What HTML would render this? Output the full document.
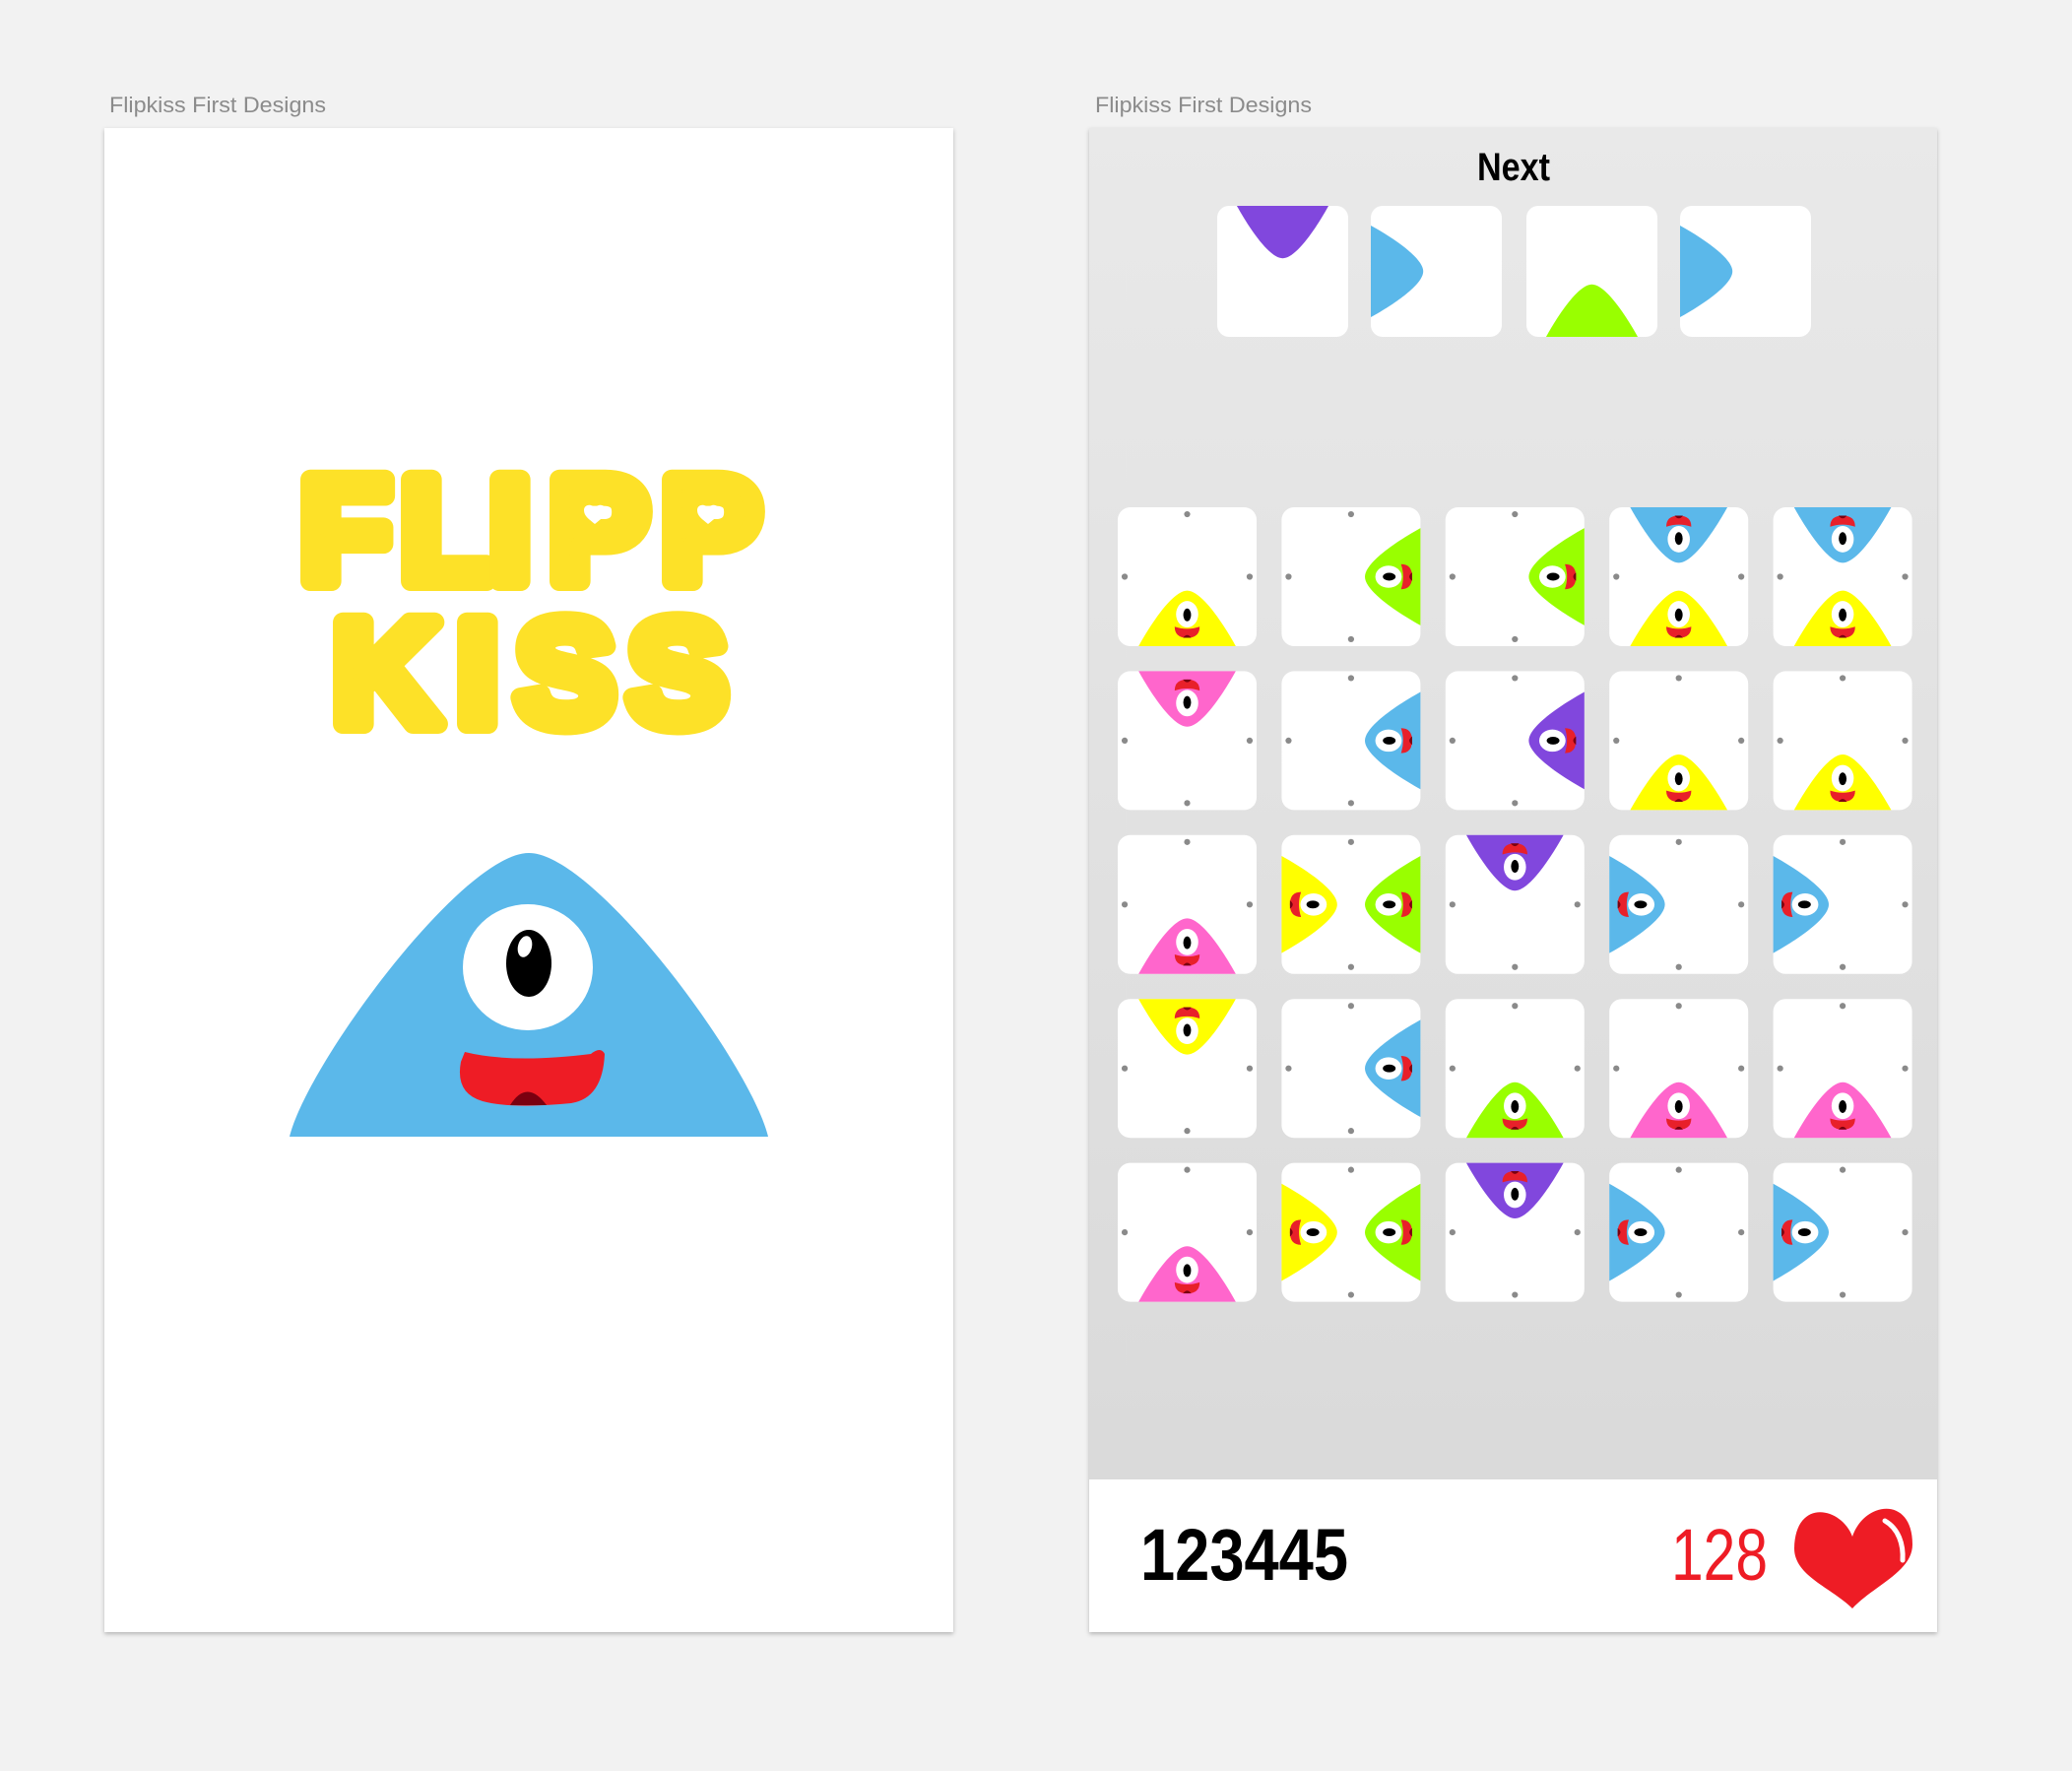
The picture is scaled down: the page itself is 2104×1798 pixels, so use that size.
<!DOCTYPE html>
<html><head><meta charset="utf-8"><style>
html,body{margin:0;padding:0;background:#f2f2f2;}
svg{display:block}
</style></head><body>
<svg width="2104" height="1798" viewBox="0 0 2104 1798" xmlns="http://www.w3.org/2000/svg">
<defs>
<linearGradient id="bg" x1="0" y1="0" x2="0" y2="1">
<stop offset="0" stop-color="#e9e9e9"/><stop offset="1" stop-color="#d8d8d8"/>
</linearGradient>
<filter id="sh" x="-5%" y="-5%" width="110%" height="110%"><feDropShadow dx="0" dy="2" stdDeviation="2" flood-color="#000" flood-opacity="0.25"/></filter>
<path id="body" d="M15,100 C25,82 40,60 50,60 C60,60 75,82 85,100 Z"/>
<g id="face">
<ellipse cx="50" cy="77" rx="8" ry="9.5" fill="#fff"/>
<ellipse cx="50" cy="77.5" rx="2.8" ry="4.6" fill="#000"/>
<path d="M41,86 Q50,89 59,86 Q59,94 50,94 Q41,94 41,86Z" fill="#e8202a"/>
<path d="M47,94 Q50,90 53,94Z" fill="#7a0010"/>
</g>
<g id="dots" fill="#8a8a8a"><circle cx="50" cy="5" r="2.2"/><circle cx="50" cy="95" r="2.2"/><circle cx="5" cy="50" r="2.2"/><circle cx="95" cy="50" r="2.2"/></g>
<rect id="tile" x="0" y="0" width="100" height="100" rx="9" fill="#fff"/>
<path id="hrt" d="M0,12 C-6,7 -11,4 -11,-2 C-11,-8 -3,-9 0,-4 C3,-9 11,-8 11,-2 C11,4 6,7 0,12Z"/>
</defs>

<text x="111" y="114" font-family="Liberation Sans, sans-serif" font-size="22" fill="#8b8b8b" textLength="220" lengthAdjust="spacingAndGlyphs">Flipkiss First Designs</text>
<text x="1112" y="114" font-family="Liberation Sans, sans-serif" font-size="22" fill="#8b8b8b" textLength="220" lengthAdjust="spacingAndGlyphs">Flipkiss First Designs</text>

<rect x="106" y="130" width="862" height="1527" fill="#fff" filter="url(#sh)"/>
<g font-family="Liberation Sans, sans-serif" font-weight="bold" fill="#fde128" stroke="#fde128" stroke-width="20" stroke-linejoin="round" stroke-linecap="round" font-size="150" lengthAdjust="spacingAndGlyphs">
<text x="305" y="590" textLength="80">F</text>
<text x="407" y="590" textLength="66">L</text>
<text x="497" y="590" textLength="36">I</text>
<text x="558" y="590" textLength="90">P</text>
<text x="672" y="590" textLength="91">P</text>
<text x="338" y="735" textLength="103">K</text>
<text x="464" y="735" textLength="36">I</text>
<text x="524" y="735" textLength="89">S</text>
<text x="638" y="735" textLength="90">S</text>
</g>
<g fill="#fff">
<use href="#hrt" transform="translate(604,520)"/>
<use href="#hrt" transform="translate(719,520)"/>
</g>
<path d="M294,1154 C312,1080 470,866 537,866 C604,866 762,1080 780,1154 Z" fill="#5bb8ea"/>
<ellipse cx="536" cy="982" rx="66" ry="64" fill="#fff"/>
<ellipse cx="537" cy="978" rx="23" ry="34" fill="#000"/>
<ellipse cx="533" cy="961" rx="7" ry="11" fill="#fff" transform="rotate(15 533 961)"/>
<path d="M472,1068 Q520,1080 600,1070 Q610,1062 614,1070 Q612,1115 580,1120 Q520,1126 490,1118 Q462,1110 468,1078 Z" fill="#ee1c25"/>
<path d="M518,1122 Q535,1095 555,1122 Z" fill="#7a0010"/>

<g filter="url(#sh)">
<rect x="1106" y="130" width="861" height="1527" fill="url(#bg)"/>
</g>
<rect x="1106" y="1502" width="861" height="155" fill="#fff"/>
<text x="1500" y="183" font-family="Liberation Sans, sans-serif" font-weight="bold" font-size="40" fill="#000" textLength="74" lengthAdjust="spacingAndGlyphs">Next</text>

<g transform="translate(1236,209) scale(1.33)"><use href="#tile"/><use href="#body" fill="#8147dd" transform="rotate(180 50 50)"/></g>
<g transform="translate(1392,209) scale(1.33)"><use href="#tile"/><use href="#body" fill="#5bb8ea" transform="rotate(90 50 50)"/></g>
<g transform="translate(1550,209) scale(1.33)"><use href="#tile"/><use href="#body" fill="#99ff00"/></g>
<g transform="translate(1706,209) scale(1.33)"><use href="#tile"/><use href="#body" fill="#5bb8ea" transform="rotate(90 50 50)"/></g>

<g transform="translate(1135,515) scale(1.41)"><use href="#tile"/><use href="#dots"/><g><use href="#body" fill="#ffff00"/><use href="#face"/></g></g>
<g transform="translate(1301.4,515) scale(1.41)"><use href="#tile"/><use href="#dots"/><g transform="rotate(-90 50 50)"><use href="#body" fill="#99ff00"/><use href="#face"/></g></g>
<g transform="translate(1467.8,515) scale(1.41)"><use href="#tile"/><use href="#dots"/><g transform="rotate(-90 50 50)"><use href="#body" fill="#99ff00"/><use href="#face"/></g></g>
<g transform="translate(1634.2,515) scale(1.41)"><use href="#tile"/><use href="#dots"/><g transform="rotate(180 50 50)"><use href="#body" fill="#5bb8ea"/><use href="#face"/></g><g><use href="#body" fill="#ffff00"/><use href="#face"/></g></g>
<g transform="translate(1800.6,515) scale(1.41)"><use href="#tile"/><use href="#dots"/><g transform="rotate(180 50 50)"><use href="#body" fill="#5bb8ea"/><use href="#face"/></g><g><use href="#body" fill="#ffff00"/><use href="#face"/></g></g>
<g transform="translate(1135,681.4) scale(1.41)"><use href="#tile"/><use href="#dots"/><g transform="rotate(180 50 50)"><use href="#body" fill="#ff66cc"/><use href="#face"/></g></g>
<g transform="translate(1301.4,681.4) scale(1.41)"><use href="#tile"/><use href="#dots"/><g transform="rotate(-90 50 50)"><use href="#body" fill="#5bb8ea"/><use href="#face"/></g></g>
<g transform="translate(1467.8,681.4) scale(1.41)"><use href="#tile"/><use href="#dots"/><g transform="rotate(-90 50 50)"><use href="#body" fill="#8147dd"/><use href="#face"/></g></g>
<g transform="translate(1634.2,681.4) scale(1.41)"><use href="#tile"/><use href="#dots"/><g><use href="#body" fill="#ffff00"/><use href="#face"/></g></g>
<g transform="translate(1800.6,681.4) scale(1.41)"><use href="#tile"/><use href="#dots"/><g><use href="#body" fill="#ffff00"/><use href="#face"/></g></g>
<g transform="translate(1135,847.8) scale(1.41)"><use href="#tile"/><use href="#dots"/><g><use href="#body" fill="#ff66cc"/><use href="#face"/></g></g>
<g transform="translate(1301.4,847.8) scale(1.41)"><use href="#tile"/><use href="#dots"/><g transform="rotate(90 50 50)"><use href="#body" fill="#ffff00"/><use href="#face"/></g><g transform="rotate(-90 50 50)"><use href="#body" fill="#99ff00"/><use href="#face"/></g></g>
<g transform="translate(1467.8,847.8) scale(1.41)"><use href="#tile"/><use href="#dots"/><g transform="rotate(180 50 50)"><use href="#body" fill="#8147dd"/><use href="#face"/></g></g>
<g transform="translate(1634.2,847.8) scale(1.41)"><use href="#tile"/><use href="#dots"/><g transform="rotate(90 50 50)"><use href="#body" fill="#5bb8ea"/><use href="#face"/></g></g>
<g transform="translate(1800.6,847.8) scale(1.41)"><use href="#tile"/><use href="#dots"/><g transform="rotate(90 50 50)"><use href="#body" fill="#5bb8ea"/><use href="#face"/></g></g>
<g transform="translate(1135,1014.2) scale(1.41)"><use href="#tile"/><use href="#dots"/><g transform="rotate(180 50 50)"><use href="#body" fill="#ffff00"/><use href="#face"/></g></g>
<g transform="translate(1301.4,1014.2) scale(1.41)"><use href="#tile"/><use href="#dots"/><g transform="rotate(-90 50 50)"><use href="#body" fill="#5bb8ea"/><use href="#face"/></g></g>
<g transform="translate(1467.8,1014.2) scale(1.41)"><use href="#tile"/><use href="#dots"/><g><use href="#body" fill="#99ff00"/><use href="#face"/></g></g>
<g transform="translate(1634.2,1014.2) scale(1.41)"><use href="#tile"/><use href="#dots"/><g><use href="#body" fill="#ff66cc"/><use href="#face"/></g></g>
<g transform="translate(1800.6,1014.2) scale(1.41)"><use href="#tile"/><use href="#dots"/><g><use href="#body" fill="#ff66cc"/><use href="#face"/></g></g>
<g transform="translate(1135,1180.6) scale(1.41)"><use href="#tile"/><use href="#dots"/><g><use href="#body" fill="#ff66cc"/><use href="#face"/></g></g>
<g transform="translate(1301.4,1180.6) scale(1.41)"><use href="#tile"/><use href="#dots"/><g transform="rotate(90 50 50)"><use href="#body" fill="#ffff00"/><use href="#face"/></g><g transform="rotate(-90 50 50)"><use href="#body" fill="#99ff00"/><use href="#face"/></g></g>
<g transform="translate(1467.8,1180.6) scale(1.41)"><use href="#tile"/><use href="#dots"/><g transform="rotate(180 50 50)"><use href="#body" fill="#8147dd"/><use href="#face"/></g></g>
<g transform="translate(1634.2,1180.6) scale(1.41)"><use href="#tile"/><use href="#dots"/><g transform="rotate(90 50 50)"><use href="#body" fill="#5bb8ea"/><use href="#face"/></g></g>
<g transform="translate(1800.6,1180.6) scale(1.41)"><use href="#tile"/><use href="#dots"/><g transform="rotate(90 50 50)"><use href="#body" fill="#5bb8ea"/><use href="#face"/></g></g>

<text x="1158" y="1604" font-family="Liberation Sans, sans-serif" font-weight="bold" font-size="74" fill="#000" textLength="211" lengthAdjust="spacingAndGlyphs">123445</text>
<text x="1697" y="1604" font-family="Liberation Sans, sans-serif" font-size="74" fill="#ee1c25" textLength="98" lengthAdjust="spacingAndGlyphs">128</text>
<path d="M1881,1560 C1870,1530 1823,1520 1822,1572 C1822,1600 1860,1612 1881,1633 C1902,1610 1942,1596 1942,1568 C1942,1518 1893,1524 1881,1560 Z" fill="#ee1c25"/>
<path d="M1914,1544 C1928,1552 1933,1568 1932,1584" stroke="#fff" stroke-width="5" fill="none" stroke-linecap="round"/>
</svg>
</body></html>
